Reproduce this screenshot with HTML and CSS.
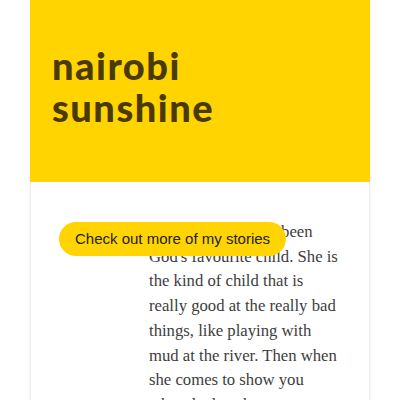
FILE: index.html
```html
<!DOCTYPE html>
<html>
<head>
<meta charset="utf-8">
<link rel="stylesheet" href="styles.css">
</head>
<body>
<article class="card">
  <header class="hero">
    <h1 class="title">nairobi<br>sunshine</h1>
  </header>
  <section class="body">
    <div class="aside"></div>
    <p class="story">Nairobi has always been God's favourite child. She is the kind of child that is really good at the really bad things, like playing with mud at the river. Then when she comes to show you what she has done</p>
    <a class="cta" href="#">Check out more of my stories</a>
  </section>
</article>
</body>
</html>
```
FILE: styles.css
```css
html, body {
  margin: 0;
  padding: 0;
  background: #ffffff;
  overflow: hidden;
}
.card {
  width: 340px;
  margin: 0 auto;
  box-sizing: border-box;
  background: #fff;
  box-shadow: 0 0 3px rgba(0,0,0,0.08);
  border-left: 1px solid #eeeeee;
  border-right: 1px solid #eeeeee;
}
.hero {
  background: #ffd400;
  padding: 44px 22px 54px;
  margin: 0 -1px;
}
.title {
  margin: 0;
  font-family: "Lato", "DejaVu Sans", sans-serif;
  font-weight: 900;
  font-size: 38px;
  line-height: 42px;
  color: #4a3a00;
  letter-spacing: 1.5px;
}
.body {
  position: relative;
  display: grid;
  grid-template-columns: 95px 1fr;
  padding: 38px 29px 40px 23px;
}
.story {
  margin: 0;
  font-family: "Liberation Serif", serif;
  font-size: 16.7px;
  line-height: 24.7px;
  color: #3d3d3d;
}
.cta {
  position: absolute;
  left: 28px;
  top: 40px;
  height: 34px;
  line-height: 34px;
  padding: 0 16px;
  border-radius: 17px;
  background: #ffd400;
  color: #222;
  font-family: "Liberation Sans", Arial, sans-serif;
  font-size: 15px;
  text-decoration: none;
  white-space: nowrap;
}
```
